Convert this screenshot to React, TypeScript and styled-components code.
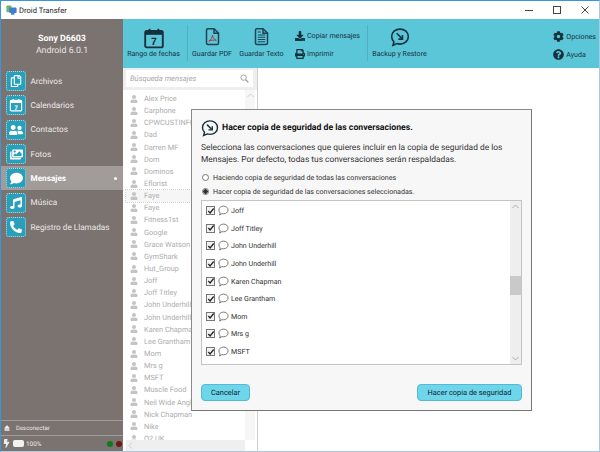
import { FC, ReactNode } from 'react';
import styled, { createGlobalStyle } from 'styled-components';
import {
  FaCog,
  FaComment,
  FaDownload,
  FaImages,
  FaMusic,
  FaPhoneAlt,
  FaPrint,
  FaQuestionCircle,
  FaRegCopy,
  FaUser,
  FaUserFriends,
  FaBolt,
  FaEject
} from 'react-icons/fa';

const GlobalStyle = createGlobalStyle`
  html, body { margin: 0; padding: 0; background: #fff; }
  body { font-family: Roboto, "Open Sans", sans-serif; text-rendering: geometricPrecision; }
  * { box-sizing: border-box; }
`;

const CalendarGlyph: FC<{ size: number; color: string }> = ({ size, color }) => (
  <svg width={size} height={size} viewBox="0 0 20 20">
    <rect x="2" y="3.5" width="16" height="15" rx="1.5" fill="none" stroke={color} strokeWidth="1.7" />
    <rect x="2" y="3.5" width="16" height="3.6" fill={color} />
    <path d="M6 1.5v3.5M14 1.5v3.5" stroke={color} strokeWidth="1.6" />
    <text x="10" y="16.6" fontSize="9.5" fontWeight="700" textAnchor="middle" fontFamily="Liberation Sans" fill={color}>
      7
    </text>
  </svg>
);

const PdfGlyph = () => (
  <svg width="15" height="19" viewBox="0 0 20 24" fill="none" stroke="#1f4554" strokeWidth="2">
    <path d="M4 1.5h8l6 6v13a2 2 0 0 1-2 2H4a2 2 0 0 1-2-2v-17a2 2 0 0 1 2-2z" />
    <path d="M12 1.5v6h6" />
    <path d="M5 18c3-1 5-5 5-8 0 3 2 6 5 7-3-.4-7 0-10 1z" strokeWidth="1.3" stroke="#b3352f" />
  </svg>
);

const TextGlyph = () => (
  <svg width="15" height="19" viewBox="0 0 20 24" fill="none" stroke="#1f4554" strokeWidth="2">
    <path d="M4 1.5h8l6 6v13a2 2 0 0 1-2 2H4a2 2 0 0 1-2-2v-17a2 2 0 0 1 2-2z" />
    <path d="M12 1.5v6h6" />
    <path d="M5 6h4M5 10h10M5 13h10M5 16h10M5 19h10" strokeWidth="1.5" />
  </svg>
);

const BackupGlyph: FC<{ size: number }> = ({ size }) => (
  <svg width={size} height={size} viewBox="0 0 24 24" fill="none" stroke="#16313d" strokeWidth="1.9">
    <path d="M12 2.5c5.6 0 10 3.8 10 9s-4.4 9-10 9c-1.3 0-2.5-.2-3.600-.6L3.500 22l1.200-4.300C3 16 2 13.900 2 11.500c0-5.200 4.400-9 10-9z" />
    <path d="M8 7.500l6.500 6.500" />
    <path d="M15 9.500V14.500H10" />
  </svg>
);

const BubbleGlyph = () => (
  <svg width="11" height="11" viewBox="0 0 12 12" fill="none" stroke="#6f6f6f" strokeWidth="1">
    <path d="M6 1.200c2.800 0 5 1.800 5 4.200S8.800 9.600 6 9.600c-.6 0-1.200-.1-1.700-.2L1.800 11l.6-2.300C1.500 7.900 1 6.700 1 5.400 1 3 3.200 1.200 6 1.200z" />
  </svg>
);

const CheckGlyph = () => (
  <svg width="8" height="8" viewBox="0 0 9 9" fill="none" stroke="#222" strokeWidth="1.4">
    <path d="M1.500 4.500l2 2.200 4-5" />
  </svg>
);

const SearchGlyph = () => (
  <svg width="9" height="9" viewBox="0 0 10 10" fill="none" stroke="#9a9a9a" strokeWidth="1">
    <circle cx="4" cy="4" r="3" />
    <path d="M6.300 6.300L9.300 9.300" strokeWidth="1.500" />
  </svg>
);

const navItems: { label: string; icon: ReactNode; active?: boolean }[] = [
  { label: 'Archivos', icon: <FaRegCopy size={12} /> },
  { label: 'Calendarios', icon: <CalendarGlyph size={14} color="#fff" /> },
  { label: 'Contactos', icon: <FaUserFriends size={14} /> },
  { label: 'Fotos', icon: <FaImages size={13} /> },
  { label: 'Mensajes', icon: <FaComment size={13} />, active: true },
  { label: 'Música', icon: <FaMusic size={12} /> },
  { label: 'Registro de Llamadas', icon: <FaPhoneAlt size={12} /> }
];

const contacts = [
  'Alex Price', 'Carphone', 'CPWCUSTINFO', 'Dad', 'Darren  MF', 'Dom', 'Dominos', 'Eflorist', 'Faye', 'Faye',
  'Fitness1st', 'Google', 'Grace Watson', 'GymShark', 'Hut_Group', 'Joff', 'Joff Titley', 'John Underhill',
  'John Underhill', 'Karen Chapman', 'Lee Grantham', 'Mom', 'Mrs g', 'MSFT', 'Muscle Food', 'Neil Wide Angle',
  'Nick Chapman', 'Nike', 'O2 UK'
];

const backupRows = [
  'Joff', 'Joff Titley', 'John Underhill', 'John Underhill', 'Karen Chapman', 'Lee Grantham', 'Mom', 'Mrs g', 'MSFT'
];

export default function App() {
  return (
    <>
      <GlobalStyle />
      <Window>
        <TitleBar>
          <AppLogo>
            <svg width="11" height="11" viewBox="0 0 13 13">
              <rect x="0.5" y="0.5" width="6" height="8" rx="1" fill="#6fb36a" />
              <rect x="4" y="3" width="8.5" height="6.5" rx="1" fill="#3f7fd0" />
              <path d="M6 9.500h4v2H6z" fill="#3f7fd0" />
            </svg>
          </AppLogo>
          <AppName>Droid Transfer</AppName>
          <WindowControls>
            <svg width="8" height="8" viewBox="0 0 8 8" stroke="#444" fill="none"><path d="M0 4.500h8" /></svg>
            <svg width="8" height="8" viewBox="0 0 8 8" stroke="#444" fill="none"><rect x="0.5" y="0.5" width="7" height="7" /></svg>
            <svg width="8" height="8" viewBox="0 0 8 8" stroke="#444" fill="none"><path d="M.5.500l7 7M7.500.500l-7 7" /></svg>
          </WindowControls>
        </TitleBar>

        <Body>
          <Sidebar>
            <Device>
              <DeviceName>Sony D6603</DeviceName>
              <DeviceOs>Android 6.0.1</DeviceOs>
            </Device>
            <Nav>
              {navItems.map((item) => (
                <NavRow key={item.label} $active={item.active}>
                  <NavIcon>{item.icon}</NavIcon>
                  <NavLabel $active={item.active}>{item.label}</NavLabel>
                  {item.active && <ActiveDot />}
                </NavRow>
              ))}
            </Nav>
            <SidebarFooter>
              <Disconnect>
                <FaEject size={6} />
                <span>Desconectar</span>
              </Disconnect>
              <StatusRow>
                <FaBolt size={9} />
                <Battery />
                <span>100%</span>
                <StatusDots>
                  <StatusDot $color="#0d7a1d" />
                  <StatusDot $color="#6e1a12" />
                </StatusDots>
              </StatusRow>
            </SidebarFooter>
          </Sidebar>

          <Main>
            <Toolbar>
              <ToolButton $width={61}>
                <CalendarGlyph size={22} color="#16313d" />
                <ToolLabel>Rango de fechas</ToolLabel>
              </ToolButton>
              <ToolDivider $offset={3} />
              <ToolButton $width={48}>
                <PdfGlyph />
                <ToolLabel>Guardar PDF</ToolLabel>
              </ToolButton>
              <ToolButton $width={51}>
                <TextGlyph />
                <ToolLabel>Guardar Texto</ToolLabel>
              </ToolButton>
              <ToolStack>
                <ToolInline>
                  <FaDownload size={10} />
                  <span>Copiar mensajes</span>
                </ToolInline>
                <ToolInline>
                  <FaPrint size={10} />
                  <span>Imprimir</span>
                </ToolInline>
              </ToolStack>
              <ToolDivider />
              <ToolButton $width={63}>
                <BackupGlyph size={20} />
                <ToolLabel>Backup y Restore</ToolLabel>
              </ToolButton>
              <SideTools>
                <ToolInline>
                  <FaCog size={11} />
                  <span>Opciones</span>
                </ToolInline>
                <ToolInline>
                  <FaQuestionCircle size={11} />
                  <span>Ayuda</span>
                </ToolInline>
              </SideTools>
            </Toolbar>

            <Content>
              <ContactsColumn>
                <SearchWrap>
                  <SearchBox>
                    <span>Búsqueda mensajes</span>
                    <SearchGlyph />
                  </SearchBox>
                </SearchWrap>
                <ContactList>
                  {contacts.map((name, index) => (
                    <ContactRow key={`${name}-${index}`} $selected={index === 8}>
                      <FaUser size={8} />
                      <span>{name}</span>
                    </ContactRow>
                  ))}
                </ContactList>
                <VerticalBar>
                  <svg width="7" height="5" viewBox="0 0 7 5" fill="none" stroke="#ccc"><path d="M.5 4l3-3 3 3" /></svg>
                </VerticalBar>
                <HorizontalBar>
                  <svg width="5" height="7" viewBox="0 0 5 7" fill="none" stroke="#ccc"><path d="M4 .5l-3 3 3 3" /></svg>
                </HorizontalBar>
              </ContactsColumn>
            </Content>
          </Main>
        </Body>

        <Dialog>
          <DialogTitle>
            <BackupGlyph size={18} />
            <span>Hacer copia de seguridad de las conversaciones.</span>
          </DialogTitle>
          <DialogText>
            Selecciona las conversaciones que quieres incluir en la copia de seguridad de los
            <br />
            Mensajes. Por defecto, todas tus conversaciones serán respaldadas.
          </DialogText>
          <RadioGroup>
            <RadioRow>
              <Radio />
              <span>Haciendo copia de seguridad de todas las conversaciones</span>
            </RadioRow>
            <RadioRow>
              <Radio $checked />
              <span>Hacer copia de seguridad de las conversaciones seleccionadas.</span>
            </RadioRow>
          </RadioGroup>
          <BackupList>
            <BackupRows>
              {backupRows.map((name, index) => (
                <BackupRow key={`${name}-${index}`}>
                  <CheckBox>
                    <CheckGlyph />
                  </CheckBox>
                  <BubbleGlyph />
                  <span>{name}</span>
                </BackupRow>
              ))}
            </BackupRows>
            <ScrollTrack>
              <ScrollArrow>
                <svg width="7" height="5" viewBox="0 0 7 5" fill="none" stroke="#aaa"><path d="M.5 4l3-3 3 3" /></svg>
              </ScrollArrow>
              <ScrollThumb />
              <ScrollArrow>
                <svg width="7" height="5" viewBox="0 0 7 5" fill="none" stroke="#aaa"><path d="M.5 1l3 3 3-3" /></svg>
              </ScrollArrow>
            </ScrollTrack>
          </BackupList>
          <DialogActions>
            <ActionButton $width={49}>Cancelar</ActionButton>
            <ActionButton $width={105}>Hacer copia de seguridad</ActionButton>
          </DialogActions>
        </Dialog>
      </Window>
    </>
  );
}

const Window = styled.div`
  position: relative;
  width: 600px;
  height: 452px;
  overflow: hidden;
  display: flex;
  flex-direction: column;
  background: #fff;
  border-top: 1px solid #3d93de;
  border-left: 1px solid #3d93de;
  border-right: 1px solid #a9c8e6;
  border-bottom: 1px solid #a9c8e6;
`;

const TitleBar = styled.div`
  height: 18px;
  display: flex;
  align-items: center;
  padding-left: 5px;
  flex-shrink: 0;
`;

const AppLogo = styled.div`
  display: flex;
  width: 11px;
  height: 11px;
`;

const AppName = styled.div`
  margin-left: 2px;
  font-size: 7.6px;
  color: #222;
`;

const WindowControls = styled.div`
  margin-left: auto;
  display: flex;
  align-items: center;
  gap: 20px;
  padding-right: 10px;
`;

const Body = styled.div`
  flex: 1;
  min-height: 0;
  display: flex;
`;

const Sidebar = styled.div`
  width: 122px;
  flex-shrink: 0;
  display: flex;
  flex-direction: column;
  background: #7a7370;
  color: #fff;
`;

const Device = styled.div`
  height: 50px;
  padding-top: 14px;
  text-align: center;
`;

const DeviceName = styled.div`
  font-size: 8.8px;
  line-height: 12px;
  font-weight: 700;
`;

const DeviceOs = styled.div`
  font-size: 8.8px;
  line-height: 12px;
  color: #e8e6e5;
`;

const Nav = styled.div`
  display: flex;
  flex-direction: column;
`;

const NavRow = styled.div<{ $active?: boolean }>`
  height: 24.3px;
  display: flex;
  align-items: center;
  padding: 0 6px 0 5px;
  background: ${(p) => (p.$active ? '#a19c99' : 'transparent')};
`;

const NavIcon = styled.div`
  width: 20px;
  height: 20px;
  flex-shrink: 0;
  display: flex;
  align-items: center;
  justify-content: center;
  border-radius: 3px;
  border: 1px dotted #b9d6dd;
  background: #29a0bb;
  color: #fff;
`;

const NavLabel = styled.div<{ $active?: boolean }>`
  margin-left: 4.5px;
  padding-top: 1.5px;
  font-size: 8.2px;
  white-space: nowrap;
  font-weight: ${(p) => (p.$active ? 700 : 400)};
  color: ${(p) => (p.$active ? '#fff' : '#ece9e8')};
`;

const ActiveDot = styled.div`
  margin-left: auto;
  width: 3px;
  height: 3px;
  border-radius: 50%;
  background: #fff;
`;

const SidebarFooter = styled.div`
  margin-top: auto;
`;

const Disconnect = styled.div`
  height: 15px;
  display: flex;
  align-items: center;
  gap: 6px;
  padding-left: 3px;
  font-size: 6px;
  color: #eee;
  border-top: 1px solid #a19c99;
`;

const StatusRow = styled.div`
  height: 16px;
  display: flex;
  align-items: center;
  padding-left: 1px;
  padding-right: 1px;
  gap: 2px;
  font-size: 6.4px;
  color: #eee;
  border-top: 1px solid #a19c99;
`;

const Battery = styled.div`
  width: 11px;
  height: 7px;
  border-radius: 2px;
  background: #f2f2f2;
`;

const StatusDots = styled.div`
  margin-left: auto;
  display: flex;
  gap: 3px;
`;

const StatusDot = styled.div<{ $color: string }>`
  width: 6px;
  height: 6px;
  border-radius: 50%;
  background: ${(p) => p.$color};
`;

const Main = styled.div`
  flex: 1;
  min-width: 0;
  display: flex;
  flex-direction: column;
`;

const Toolbar = styled.div`
  height: 49px;
  flex-shrink: 0;
  display: flex;
  align-items: stretch;
  background: #5cc6d9;
  color: #16313d;
`;

const ToolButton = styled.div<{ $width: number }>`
  width: ${(p) => p.$width}px;
  display: flex;
  flex-direction: column;
  align-items: center;
  padding: 8px 0 9px;
`;

const ToolLabel = styled.div`
  margin-top: auto;
  height: 10px;
  font-size: 7.1px;
  line-height: 10px;
  white-space: nowrap;
`;

const ToolDivider = styled.div<{ $offset?: number }>`
  width: 1px;
  margin: 6px 0 7px ${(p) => p.$offset ?? 0}px;
  background: #4fb0c2;
`;

const ToolStack = styled.div`
  margin-left: 8px;
  width: 72px;
  display: flex;
  flex-direction: column;
  gap: 7px;
  padding-top: 11px;
`;

const ToolInline = styled.div`
  display: flex;
  align-items: center;
  gap: 2px;
  height: 11px;
  font-size: 7.1px;
  white-space: nowrap;
`;

const SideTools = styled.div`
  margin-left: auto;
  padding-right: 3px;
  padding-top: 11.5px;
  display: flex;
  flex-direction: column;
  gap: 7px;
`;

const Content = styled.div`
  flex: 1;
  min-height: 0;
  display: flex;
`;

const ContactsColumn = styled.div`
  position: relative;
  width: 135px;
  display: flex;
  flex-direction: column;
  overflow: hidden;
  border-right: 1px solid #cfcfcf;
`;

const SearchWrap = styled.div`
  height: 22px;
  flex-shrink: 0;
  padding: 2px 4px 3px 3px;
  background: #eeeeee;
`;

const SearchBox = styled.div`
  height: 17px;
  display: flex;
  align-items: center;
  justify-content: space-between;
  padding: 0 4px;
  background: #fff;
  font-size: 7.6px;
  font-style: italic;
  color: #a8a8a8;
`;

const ContactList = styled.div`
  flex: 1;
  min-height: 0;
  overflow: hidden;
  padding-top: 2.5px;
`;

const ContactRow = styled.div<{ $selected?: boolean }>`
  height: 12.15px;
  display: flex;
  align-items: center;
  gap: 6px;
  margin-left: 3px;
  padding-left: 4px;
  font-size: 7.4px;
  white-space: nowrap;
  color: #adadad;
  background: ${(p) => (p.$selected ? '#f6f6f6' : 'transparent')};
  outline: ${(p) => (p.$selected ? '1px dotted #d2d2d2' : 'none')};
  svg {
    color: #c4c4c4;
    flex-shrink: 0;
  }
`;

const VerticalBar = styled.div`
  position: absolute;
  top: 22px;
  right: 2px;
  bottom: 11px;
  width: 10px;
  padding-top: 3px;
  display: flex;
  justify-content: center;
  align-items: flex-start;
  background: #f6f6f6;
`;

const HorizontalBar = styled.div`
  position: absolute;
  left: 3px;
  right: 12px;
  bottom: 0;
  height: 11px;
  padding-left: 2px;
  display: flex;
  align-items: center;
  background: #efefef;
`;

const Dialog = styled.div`
  position: absolute;
  left: 190px;
  top: 108px;
  width: 341px;
  height: 302px;
  display: flex;
  flex-direction: column;
  padding: 9px 9px 0 9px;
  background: #f7f7f7;
  border: 1px solid #8a8a8a;
  border-right-color: #777;
  border-bottom-color: #777;
`;

const DialogTitle = styled.div`
  display: flex;
  align-items: center;
  gap: 3px;
  height: 17px;
  font-size: 8.7px;
  font-weight: 700;
  color: #111;
`;

const DialogText = styled.div`
  margin-top: 6px;
  font-size: 8.4px;
  line-height: 12px;
  color: #333;
  white-space: nowrap;
`;

const RadioGroup = styled.div`
  margin-top: 5px;
  display: flex;
  flex-direction: column;
  gap: 2.5px;
`;

const RadioRow = styled.div`
  height: 12px;
  display: flex;
  align-items: center;
  gap: 4px;
  font-size: 7.1px;
  color: #333;
`;

const Radio = styled.div<{ $checked?: boolean }>`
  width: 7px;
  height: 7px;
  margin-left: 1px;
  border-radius: 50%;
  border: 1px solid #777;
  background: ${(p) => (p.$checked ? 'radial-gradient(circle, #333 0 2px, #fff 2.5px)' : '#fff')};
`;

const BackupList = styled.div`
  margin-top: 2.5px;
  height: 165px;
  display: flex;
  justify-content: space-between;
  background: #fff;
  border: 1px solid #c4c4c4;
`;

const BackupRows = styled.div`
  padding: 1px 0 0 4px;
`;

const BackupRow = styled.div`
  height: 17.6px;
  display: flex;
  align-items: center;
  font-size: 7.1px;
  color: #333;
  svg {
    flex-shrink: 0;
  }
  > svg {
    margin: 0 2px 0 3px;
  }
`;

const CheckBox = styled.div`
  width: 9px;
  height: 9px;
  display: flex;
  align-items: center;
  justify-content: center;
  border: 1px solid #777;
  background: #f2f2f2;
`;

const ScrollTrack = styled.div`
  width: 11px;
  display: flex;
  flex-direction: column;
  align-items: center;
  background: #eeeeee;
`;

const ScrollArrow = styled.div`
  height: 11px;
  display: flex;
  align-items: center;
  justify-content: center;
`;

const ScrollThumb = styled.div`
  width: 11px;
  height: 19px;
  margin-top: 64px;
  margin-bottom: auto;
  background: #c9c9c9;
`;

const DialogActions = styled.div`
  margin-top: 19px;
  display: flex;
  justify-content: space-between;
`;

const ActionButton = styled.div<{ $width: number }>`
  width: ${(p) => p.$width}px;
  height: 17px;
  display: flex;
  align-items: center;
  justify-content: center;
  border-radius: 4px;
  border: 1px solid #56b9d0;
  background: #6dd6ea;
  font-size: 7.4px;
  color: #123;
`;
